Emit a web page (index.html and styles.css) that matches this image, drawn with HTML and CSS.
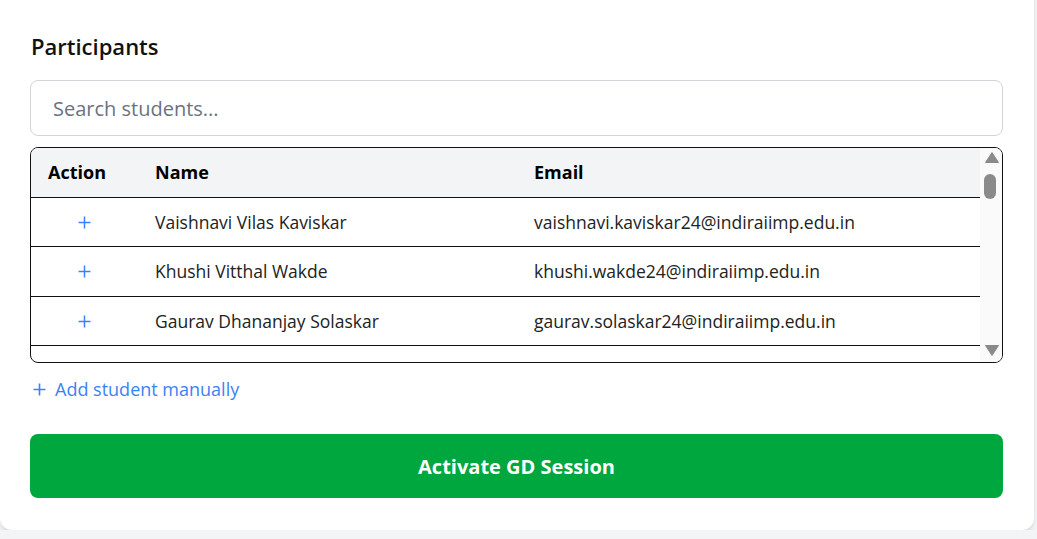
FILE: index.html
```html
<!DOCTYPE html>
<html lang="en">
<head>
<meta charset="utf-8">
<title>Participants</title>
<link rel="stylesheet" href="styles.css">
</head>
<body>
<div class="card">
  <h2 class="title">Participants</h2>
  <input class="search" type="text" placeholder="Search students...">
  <div class="table-wrap">
    <div class="table-viewport">
      <table class="students">
        <thead>
          <tr><th class="col-action">Action</th><th class="col-name">Name</th><th class="col-email">Email</th></tr>
        </thead>
        <tbody>
          <tr><td class="act"><svg class="plus" viewBox="0 0 12 12"><path d="M6 0.5V11.5M0.5 6H11.5"/></svg></td><td>Vaishnavi Vilas Kaviskar</td><td>vaishnavi.kaviskar24@indiraiimp.edu.in</td></tr>
          <tr><td class="act"><svg class="plus" viewBox="0 0 12 12"><path d="M6 0.5V11.5M0.5 6H11.5"/></svg></td><td>Khushi Vitthal Wakde</td><td>khushi.wakde24@indiraiimp.edu.in</td></tr>
          <tr><td class="act"><svg class="plus" viewBox="0 0 12 12"><path d="M6 0.5V11.5M0.5 6H11.5"/></svg></td><td>Gaurav Dhananjay Solaskar</td><td>gaurav.solaskar24@indiraiimp.edu.in</td></tr>
          <tr><td class="act"><svg class="plus" viewBox="0 0 12 12"><path d="M6 0.5V11.5M0.5 6H11.5"/></svg></td><td>Aditi Sunil Deshmukh</td><td>aditi.deshmukh24@indiraiimp.edu.in</td></tr>
        </tbody>
      </table>
    </div>
    <div class="scrollbar" aria-hidden="true">
      <svg class="arrow" viewBox="0 0 14 11"><path d="M7 0.5L13.5 10.5H0.5Z"/></svg>
      <div class="track"><div class="thumb"></div></div>
      <svg class="arrow" viewBox="0 0 14 11"><path d="M7 10.5L13.5 0.5H0.5Z"/></svg>
    </div>
  </div>
  <a class="add-link" href="#"><svg class="add-plus" viewBox="0 0 12 12"><path d="M6 0.5V11.5M0.5 6H11.5"/></svg><span>Add student manually</span></a>
  <button class="activate" type="button">Activate GD Session</button>
</div>
</body>
</html>
```

FILE: styles.css
```css
html, body {
  margin: 0;
  padding: 0;
}
body {
  background: #f3f4f6;
  font-family: "Open Sans", "Noto Sans", sans-serif;
  color: #111827;
  overflow: hidden;
}
.card {
  background: #ffffff;
  margin: -20px 3px 0 0;
  padding: 52px 31px 32px 30px;
  border-radius: 12px;
  box-shadow: 0 4px 6px -1px rgba(0,0,0,0.1), 0 2px 4px -2px rgba(0,0,0,0.1);
  display: flex;
  flex-direction: column;
}
.title {
  margin: 0 0 20px 1px;
  font-size: 22px;
  line-height: 28px;
  font-weight: 600;
  color: #111;
}
.search {
  box-sizing: border-box;
  height: 56px;
  width: 100%;
  border: 1px solid #d1d5db;
  border-radius: 8px;
  padding: 0 22px;
  font-family: inherit;
  font-size: 20px;
  color: #111;
  outline: none;
}
.search::placeholder {
  color: #6b7280;
}
.table-wrap {
  margin-top: 11px;
  box-sizing: border-box;
  height: 216px;
  border: 1px solid #111;
  border-radius: 8px;
  overflow: hidden;
  display: flex;
}
.table-viewport {
  flex: 1;
  min-width: 0;
  overflow: hidden;
}
.scrollbar {
  width: 22px;
  flex: none;
  background: #fafafa;
  display: flex;
  flex-direction: column;
  align-items: center;
  padding: 4px 0 6px;
  box-sizing: border-box;
}
.arrow {
  width: 14px;
  height: 11px;
  flex: none;
  fill: #8a8a8a;
  stroke: #8a8a8a;
  stroke-linejoin: round;
  margin-left: 1px;
}
.track {
  flex: 1;
  width: 100%;
  padding: 11px 0 0 4px;
  box-sizing: border-box;
}
.thumb {
  width: 12px;
  height: 25px;
  border-radius: 6px;
  background: #8a8a8a;
}
.students {
  width: 100%;
  border-collapse: collapse;
  font-size: 17.5px;
  line-height: 24.5px;
}
.students th {
  background: #f3f4f6;
  text-align: left;
  font-weight: 700;
  font-size: 18px;
  color: #000;
  padding: 12px 17px;
  border-bottom: 1px solid #111;
}
.students td {
  padding: 12px 17px;
  color: #222;
  border-bottom: 1px solid #111;
  white-space: nowrap;
}
.col-action { width: 73px; }
.col-name { width: 345px; }
.students td.act {
  text-align: center;
}
.plus {
  width: 13px;
  height: 13px;
  display: inline-block;
  vertical-align: 0;
  fill: none;
  stroke: #3b82f6;
  stroke-width: 1.4;
}
.add-link {
  margin-top: 14px;
  display: flex;
  align-items: center;
  gap: 9px;
  align-self: flex-start;
  padding-left: 3px;
  color: #3b82f6;
  text-decoration: none;
  font-size: 18px;
  line-height: 24px;
}
.add-plus {
  width: 13px;
  height: 13px;
  fill: none;
  stroke: #3b82f6;
  stroke-width: 1.5;
}
.activate {
  margin-top: 33px;
  height: 64px;
  width: 100%;
  border: none;
  border-radius: 8px;
  background: #00a63e;
  color: #fff;
  font-family: inherit;
  font-size: 20px;
  font-weight: 700;
  cursor: pointer;
}
```
